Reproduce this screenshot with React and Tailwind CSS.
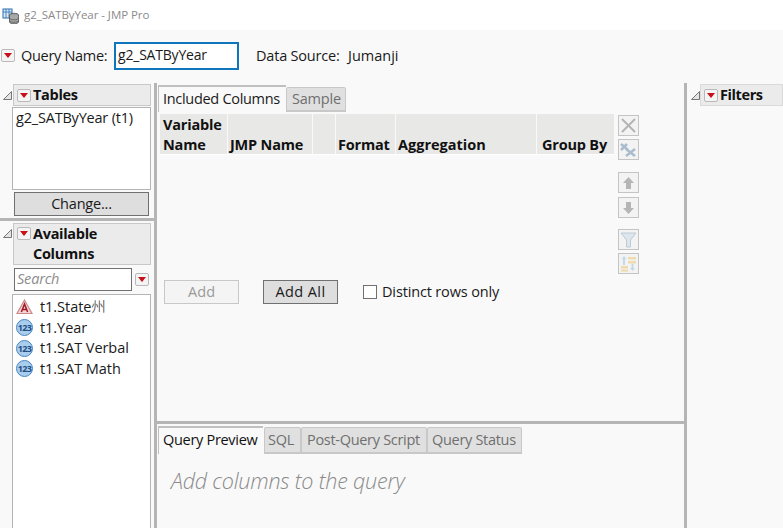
import React from "react";

function Menu({ className = "" }) {
  return (
    <span className={"inline-flex items-center justify-center w-[14px] h-[13px] shrink-0 rounded-[2px] border border-[#b9b9b9] bg-[#f4f4f4] " + className}>
      <svg width="8" height="5" viewBox="0 0 8 5"><path d="M0 0h8L4 5z" fill="#c8101a" /></svg>
    </span>
  );
}

function Collapse() {
  return (
    <svg width="9" height="9" viewBox="0 0 9 9" className="shrink-0">
      <path d="M8.5 .5V8.5H.5z" fill="#e4e4e4" stroke="#777" strokeWidth="1" />
    </svg>
  );
}

function A() {
  return (
    <svg width="17" height="16" viewBox="0 0 17 16" className="shrink-0">
      <path d="M8.5 1L16 14.500H1z" fill="#f6d5d5" stroke="#c98a8a" strokeWidth="1.200" />
      <path d="M5.400 13L8.500 5l3.100 8M6.500 10.400h4" fill="none" stroke="#a01822" strokeWidth="1.500" />
    </svg>
  );
}

function N() {
  return (
    <span className="w-[17px] h-[17px] shrink-0 rounded-full border border-[#4a86c0] bg-[#a9cdec] flex items-center justify-center text-[9px] font-bold text-[#1f4f86] leading-none tracking-[-0.6px]">
      123
    </span>
  );
}

function Tool({ children }) {
  return (
    <div className="w-[21px] h-[21px] border border-[#c4c4c4] bg-[#f3f3f3] flex items-center justify-center">
      {children}
    </div>
  );
}

function Th({ w, children }) {
  return (
    <div className={"bg-[#e8e8e6] h-[40px] flex items-end px-[3px] font-bold text-[#111] leading-[20px] text-[14.5px] " + w}>
      <span className="-mb-px">{children}</span>
    </div>
  );
}

export default function App() {
  return (
    <div
      className="w-[783px] h-[528px] overflow-hidden flex flex-col bg-[#f9f9f9] text-[14.5px] text-[#1a1a1a] tracking-[-0.2px]"
      style={{ fontFamily: '"Open Sans", "Noto Sans", "Noto Sans CJK SC", sans-serif' }}
    >
      {/* title bar */}
      <div className="h-[30px] bg-white flex items-center pl-[2px] gap-[5px] shrink-0">
        <svg width="17" height="17" viewBox="0 0 17 17">
          <rect x="1" y="2" width="9" height="9" fill="#dbe9f7" stroke="#2a6fb0" />
          <path d="M1 5h9M4 2v9M7 2v9" stroke="#2a6fb0" strokeWidth=".8" />
          <ellipse cx="12" cy="8" rx="4.500" ry="1.800" fill="#9a9a9a" stroke="#444" strokeWidth=".7" />
          <path d="M7.500 8v7c0 1 2 1.800 4.500 1.800s4.500-.8 4.500-1.800V8" fill="#a8a8a8" stroke="#444" strokeWidth=".7" />
          <path d="M7.500 11c0 1 2 1.800 4.500 1.800s4.500-.8 4.500-1.800M7.500 13.500c0 1 2 1.800 4.500 1.800s4.500-.8 4.500-1.800" fill="none" stroke="#444" strokeWidth=".6" />
        </svg>
        <span className="text-[11.5px] text-[#8b8b8b] tracking-[-0.05px]">g2_SATByYear - JMP Pro</span>
      </div>

      {/* query row */}
      <div className="h-[53px] shrink-0 flex items-center pl-[1px] pb-[2px]">
        <Menu />
        <span className="ml-[6px] w-[93px] tracking-[-0.3px] whitespace-nowrap">Query Name:</span>
        <div className="w-[125px] h-[28px] border-2 border-[#0f75bc] bg-white pl-[2px] flex items-start leading-[22px] text-[14px]">g2_SATByYear</div>
        <span className="ml-[17px] w-[82px] whitespace-nowrap">Data Source:</span>
        <span className="ml-[10px] tracking-[0px]">Jumanji</span>
      </div>

      {/* body */}
      <div className="flex-1 flex min-h-0">
        {/* left */}
        <div className="w-[154px] shrink-0 flex flex-col">
          <div className="h-[135px] flex flex-col shrink-0 pr-[3px]">
            <div className="flex items-center h-[22px] mt-[1px]">
              <div className="w-[13px] pl-[3px]"><Collapse /></div>
              <div className="flex-1 h-[22px] bg-[#ebebeb] border border-[#c8c8c8] flex items-center pl-[3px] gap-[2px] font-bold text-[#111] tracking-[-0.3px]">
                <Menu />Tables
              </div>
            </div>
            <div className="ml-[12px] h-[83px] mt-[1px] bg-white border border-[#b4b4b4] pl-[3px] leading-[20px] tracking-[-0.2px]">g2_SATByYear (t1)</div>
            <div className="ml-[14px] mr-[2px] h-[24px] mt-[2px] bg-[#dedede] border border-[#707070] flex items-center justify-center">Change...</div>
          </div>
          <div className="h-[3px] bg-[#b5b5b5] shrink-0" />
          <div className="flex-1 flex flex-col min-h-0 pr-[3px]">
            <div className="flex items-start mt-[2px]">
              <div className="w-[13px] pl-[3px] pt-[6px]"><Collapse /></div>
              <div className="flex-1 h-[42px] bg-[#ebebeb] border border-[#c8c8c8] flex items-start pl-[3px] gap-[2px] font-bold text-[#111] leading-[20px] tracking-[-0.3px]">
                <Menu className="mt-[3px]" /><span>Available<br />Columns</span>
              </div>
            </div>
            <div className="flex items-center ml-[14px] mt-[3px] h-[23px]">
              <div className="w-[118px] h-[23px] border border-[#707070] bg-white pl-[2px] italic text-[#8c8c8c] leading-[19px]">Search</div>
              <Menu className="ml-[3px]" />
            </div>
            <div className="ml-[12px] mt-[3px] flex-1 bg-white border border-[#b4b4b4] border-b-0 pl-[3px] pt-[2px] flex flex-col tracking-[-0.05px]">
              <div className="h-[20.500px] flex items-center gap-[7px]"><A /><span>t1.State<span className="font-light">州</span></span></div>
              <div className="h-[20.500px] flex items-center gap-[7px]"><N /><span>t1.Year</span></div>
              <div className="h-[20.500px] flex items-center gap-[7px]"><N /><span>t1.SAT Verbal</span></div>
              <div className="h-[20.500px] flex items-center gap-[7px]"><N /><span>t1.SAT Math</span></div>
            </div>
          </div>
        </div>

        <div className="w-[3px] bg-[#b5b5b5] shrink-0" />

        {/* center */}
        <div className="w-[527px] shrink-0 flex flex-col">
          <div className="h-[338px] shrink-0 flex flex-col">
            <div className="h-[28px] mt-[1px] flex items-end pl-[1px] shrink-0">
              <div className="w-[128px] h-[27px] bg-[#f9f9f9] border-t-2 border-l border-[#c0c0c0] pl-[4px] pb-[2px] flex items-center tracking-[-0.3px]">Included Columns</div>
              <div className="w-[60px] h-[25px] bg-[#e0e0e0] border border-b-2 border-[#c8c8c8] rounded-t-[2px] pl-[5px] flex items-center text-[#6f6f6f]">Sample</div>
            </div>
            <div className="flex mt-[2px]">
              <div className="ml-[3px] flex flex-col">
                <div className="flex gap-[1px] border-b border-white">
                  <Th w="w-[67px]"><>Variable<br />Name</></Th>
                  <Th w="w-[84px]"><span className="-ml-[1px]">JMP Name</span></Th>
                  <Th w="w-[22px]" />
                  <Th w="w-[59px]"><span className="-ml-[1px]">Format</span></Th>
                  <Th w="w-[140px]"><span className="-ml-[1px] tracking-[0px]">Aggregation</span></Th>
                  <Th w="w-[77px]"><span className="pl-[2px]">Group By</span></Th>
                </div>
                <div className="h-[125px]" />
                <div className="flex items-center">
                  <div className="ml-[4px] w-[75px] h-[24px] border border-[#c8c8c8] bg-[#f4f4f4] text-[#9a9a9a] flex items-center justify-center tracking-[0.1px]">Add</div>
                  <div className="ml-[24px] w-[75px] h-[24px] border border-[#707070] bg-[#dedede] flex items-center justify-center tracking-[0.4px]">Add All</div>
                  <div className="ml-[25px] w-[14px] h-[14px] border border-[#707070] bg-white" />
                  <span className="ml-[5px] tracking-[-0.15px]">Distinct rows only</span>
                </div>
              </div>
              <div className="ml-[4px] mt-[1px] flex flex-col">
                <Tool>
                  <svg width="15" height="15" viewBox="0 0 15 15"><path d="M1 1l13 13M14 1L1 14" stroke="#b4b4b4" strokeWidth="2" /></svg>
                </Tool>
                <div className="h-[3px]" />
                <Tool>
                  <svg width="17" height="15" viewBox="0 0 17 15"><path d="M1 2l7 6M7 2L1 8" stroke="#a9bccd" strokeWidth="2.500" /><path d="M6 7l9 7M15 7l-9 7" stroke="#a9bccd" strokeWidth="2.500" /></svg>
                </Tool>
                <div className="h-[12px]" />
                <Tool>
                  <svg width="13" height="14" viewBox="0 0 13 14"><path d="M6.500 1L12 7H9v6H4V7H1z" fill="#b5b5b5" /></svg>
                </Tool>
                <div className="h-[4px]" />
                <Tool>
                  <svg width="13" height="14" viewBox="0 0 13 14"><path d="M6.500 13L12 7H9V1H4v6H1z" fill="#b5b5b5" /></svg>
                </Tool>
                <div className="h-[11px]" />
                <Tool>
                  <svg width="17" height="17" viewBox="0 0 17 17"><path d="M1 2h15l-5.500 7v7h-4V9z" fill="#dce6ee" stroke="#c0cad2" /></svg>
                </Tool>
                <div className="h-[3px]" />
                <Tool>
                  <svg width="17" height="17" viewBox="0 0 17 17">
                    <path d="M4 1L1.500 4h1.500v6h2V4h1.500z" fill="#c3d9ea" />
                    <rect x="8" y="2" width="8" height="2.500" fill="#efdcae" />
                    <rect x="8" y="6" width="8" height="2.500" fill="#efdcae" />
                    <rect x="1" y="11" width="7" height="2.500" fill="#efdcae" />
                    <rect x="1" y="14.500" width="7" height="2.200" fill="#efdcae" />
                    <path d="M12.500 16L15 13h-1.500V9h-2v4H10z" fill="#c3d9ea" />
                  </svg>
                </Tool>
              </div>
            </div>
          </div>
          <div className="h-[3px] bg-[#b5b5b5] shrink-0" />
          <div className="flex-1 flex flex-col pl-[1px]">
            <div className="h-[30px] flex items-end shrink-0">
              <div className="w-[105px] h-[28px] border-t-2 border-l border-[#c0c0c0] pl-[4px] pb-[2px] flex items-center text-[#111] tracking-[-0.3px]">Query Preview</div>
              <div className="ml-[1px] w-[37px] h-[27px] bg-[#e0e0e0] border border-b-2 border-[#c8c8c8] rounded-t-[2px] pl-[3px] flex items-center text-[#6f6f6f]">SQL</div>
              <div className="w-[126px] h-[27px] bg-[#e0e0e0] border border-b-2 border-[#c8c8c8] rounded-t-[2px] pl-[5px] flex items-center text-[#6f6f6f] tracking-[-0.3px]">Post-Query Script</div>
              <div className="w-[95px] h-[27px] bg-[#e0e0e0] border border-b-2 border-[#c8c8c8] rounded-t-[2px] pl-[4px] flex items-center text-[#6f6f6f] tracking-[-0.3px]">Query Status</div>
            </div>
            <div className="pl-[13px] pt-[13px] italic text-[21.500px] leading-[28px] text-[#8a8a8a] font-light tracking-[-0.2px]">Add columns to the query</div>
          </div>
        </div>

        <div className="w-[3px] bg-[#b5b5b5] shrink-0" />

        {/* right */}
        <div className="flex-1">
          <div className="flex items-center h-[22px] mt-[1px]">
            <div className="w-[13px] pl-[4px]"><Collapse /></div>
            <div className="flex-1 h-[22px] bg-[#ebebeb] border border-[#dadada] flex items-center pl-[3px] gap-[2px] font-bold text-[#111] tracking-[-0.4px]">
              <Menu />Filters
            </div>
          </div>
        </div>
      </div>
    </div>
  );
}
